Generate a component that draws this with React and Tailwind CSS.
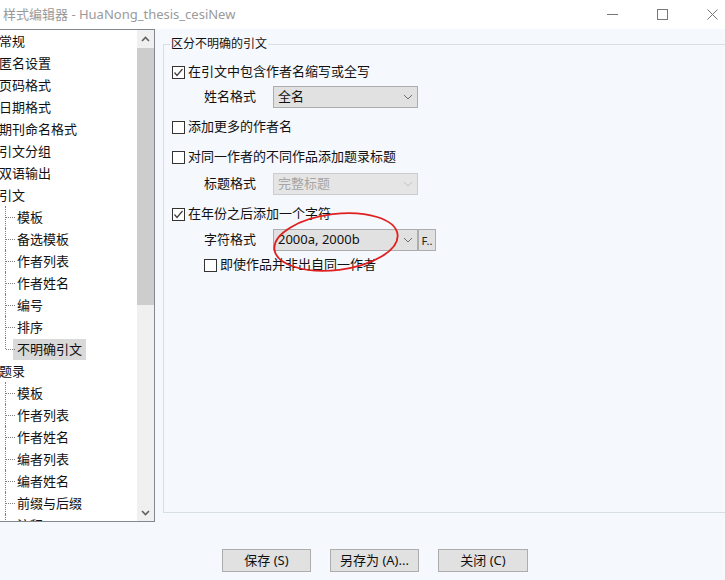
import React from 'react';

const font = { fontFamily: '"Noto Sans", "Noto Sans CJK SC", sans-serif' };

const Chevron = ({ disabled = false }) => (
  <svg width="10" height="6" viewBox="0 0 10 6" className="shrink-0">
    <path d="M1 1 L5 5 L9 1" fill="none" stroke={disabled ? '#c4c4c4' : '#6d6d6d'} strokeWidth="1" />
  </svg>
);

const CheckBox = ({ checked }) => (
  <span className="w-[13px] h-[13px] border border-[#333333] bg-white flex items-center justify-center shrink-0">
    {checked && (
      <svg width="11" height="11" viewBox="0 0 11 11">
        <path d="M1.5 5.5 L4 8.5 L9.5 2" fill="none" stroke="#3c3c3c" strokeWidth="1.2" />
      </svg>
    )}
  </span>
);

const CheckRow = ({ checked, label, className = '' }) => (
  <div className={`flex items-center h-[20px] gap-[3px] ${className}`}>
    <CheckBox checked={checked} />
    <span className="text-[13px] text-[#111]">{label}</span>
  </div>
);

const SelectRow = ({ label, value, disabled = false, extra = false, className = '' }) => (
  <div className={`flex items-center h-[22px] ${className}`}>
    <span className="w-[101px] pl-[32px] text-[13px] text-[#111]">{label}</span>
    <div className={`w-[145px] h-[22px] flex items-center justify-between pl-[4px] pr-[4px] border ${disabled ? 'bg-[#e5e5e5] border-[#cccccc] text-[#a6a6a6]' : 'bg-[#e1e1e1] border-[#adadad] text-[#111]'}`}>
      <span className="text-[13px]">{value}</span>
      <Chevron disabled={disabled} />
    </div>
    {extra && (
      <div className="w-[18px] h-[22px] bg-[#e1e1e1] border border-[#adadad] flex items-center justify-center text-[11px] text-[#222] leading-none">
        F..
      </div>
    )}
  </div>
);

const tree = [
  { label: '常规' },
  { label: '匿名设置' },
  { label: '页码格式' },
  { label: '日期格式' },
  { label: '期刊命名格式' },
  { label: '引文分组' },
  { label: '双语输出' },
  { label: '引文', children: ['模板', '备选模板', '作者列表', '作者姓名', '编号', '排序', '不明确引文'] },
  { label: '题录', children: ['模板', '作者列表', '作者姓名', '编者列表', '编者姓名', '前缀与后缀', '注释'], open: true },
];

const TreeChild = ({ label, last, selected }) => (
  <div className="flex h-[22px] items-center">
    <div className="relative w-[14px] h-full shrink-0">
      <div className={`absolute left-[6px] top-0 border-l border-dotted border-[#808080] ${last ? 'h-[11px]' : 'h-[22px]'}`}></div>
      <div className="absolute left-[7px] top-[11px] w-[9px] border-t border-dotted border-[#808080]"></div>
    </div>
    <span className={`px-[4px] h-[21px] leading-[21px] whitespace-nowrap ${selected ? 'bg-[#d9d9d9]' : ''}`}>{label}</span>
  </div>
);

const TreePanel = () => (
  <div className="w-[155px] shrink-0 h-full bg-white border-t border-r border-b border-[#828790] flex overflow-hidden">
    <div className="flex-1 overflow-hidden text-[13px] text-[#111] -ml-[1px]">
      {tree.map((item) => (
        <div key={item.label}>
          <div className="h-[22px] leading-[22px] whitespace-nowrap">{item.label}</div>
          {item.children &&
            item.children.map((c, i) => (
              <TreeChild
                key={c}
                label={c}
                last={!item.open && i === item.children.length - 1}
                selected={c === '不明确引文'}
              />
            ))}
        </div>
      ))}
    </div>
    {/* scrollbar */}
    <div className="w-[17px] h-full bg-[#f0f0f0] flex flex-col shrink-0">
      <div className="h-[18px] flex items-center justify-center">
        <svg width="9" height="6" viewBox="0 0 9 6">
          <path d="M1 5 L4.5 1.5 L8 5" fill="none" stroke="#606060" strokeWidth="1.6" />
        </svg>
      </div>
      <div className="h-[257px] bg-[#cdcdcd]"></div>
      <div className="flex-1"></div>
      <div className="h-[17px] flex items-center justify-center">
        <svg width="9" height="6" viewBox="0 0 9 6">
          <path d="M1 1 L4.5 4.5 L8 1" fill="none" stroke="#606060" strokeWidth="1.6" />
        </svg>
      </div>
    </div>
  </div>
);

const Button = ({ children, w }) => (
  <button className={`${w} h-[23px] bg-[#e1e1e1] border border-[#adadad] text-[13px] text-[#111] flex items-center justify-center`}>
    {children}
  </button>
);

export default function App() {
  return (
    <div className="relative w-[725px] h-[580px] bg-[#f5f8fc] flex flex-col overflow-hidden" style={font}>
      {/* title bar */}
      <div className="h-[29px] bg-white flex items-center shrink-0">
        <span className="pl-[3px] text-[13px] text-[#9a9a9a] whitespace-nowrap">样式编辑器 - HuaNong_thesis_cesiNew</span>
        <div className="ml-auto flex items-center gap-[39px] pr-[7px]">
          <div className="w-[11px] border-t border-[#777]"></div>
          <div className="w-[11px] h-[11px] border border-[#777]"></div>
          <svg width="11" height="11" viewBox="0 0 11 11">
            <path d="M0.5 0.5 L10.5 10.5 M10.5 0.5 L0.5 10.5" stroke="#777" strokeWidth="1" />
          </svg>
        </div>
      </div>

      {/* main */}
      <div className="h-[493px] flex shrink-0 overflow-hidden">
        <TreePanel />
        <div className="pl-[8px] pt-[7px] shrink-0">
          <fieldset className="w-[570px] h-[477px] border border-[#d5dfe5] pl-[8px]">
            <legend className="-ml-[2px] px-[1px] text-[12px] leading-[16px] text-[#111]">区分不明确的引文</legend>
            <CheckRow checked label="在引文中包含作者名缩写或全写" className="mt-[10px]" />
            <SelectRow label="姓名格式" value="全名" className="mt-[4px]" />
            <CheckRow label="添加更多的作者名" className="mt-[9px]" />
            <CheckRow label="对同一作者的不同作品添加题录标题" className="mt-[10px]" />
            <SelectRow label="标题格式" value="完整标题" disabled className="mt-[6px]" />
            <CheckRow checked label="在年份之后添加一个字符" className="mt-[9px]" />
            <SelectRow label="字符格式" value="2000a, 2000b" extra className="mt-[5px]" />
            <CheckRow label="即使作品并非出自同一作者" className="mt-[4px] ml-[32px]" />
          </fieldset>
        </div>
      </div>

      {/* buttons */}
      <div className="flex-1 flex items-start pt-[27px] pl-[222px] gap-[19px]">
        <Button w="w-[89px]">保存 (S)</Button>
        <Button w="w-[89px]">另存为 (A)...</Button>
        <Button w="w-[90px]">关闭 (C)</Button>
      </div>

      {/* red annotation ellipse */}
      <svg className="absolute left-0 top-0 pointer-events-none" width="725" height="580">
        <ellipse cx="336" cy="242" rx="62" ry="28" fill="none" stroke="#e02020" strokeWidth="1.8" transform="rotate(-7 336 242)" />
      </svg>
    </div>
  );
}
